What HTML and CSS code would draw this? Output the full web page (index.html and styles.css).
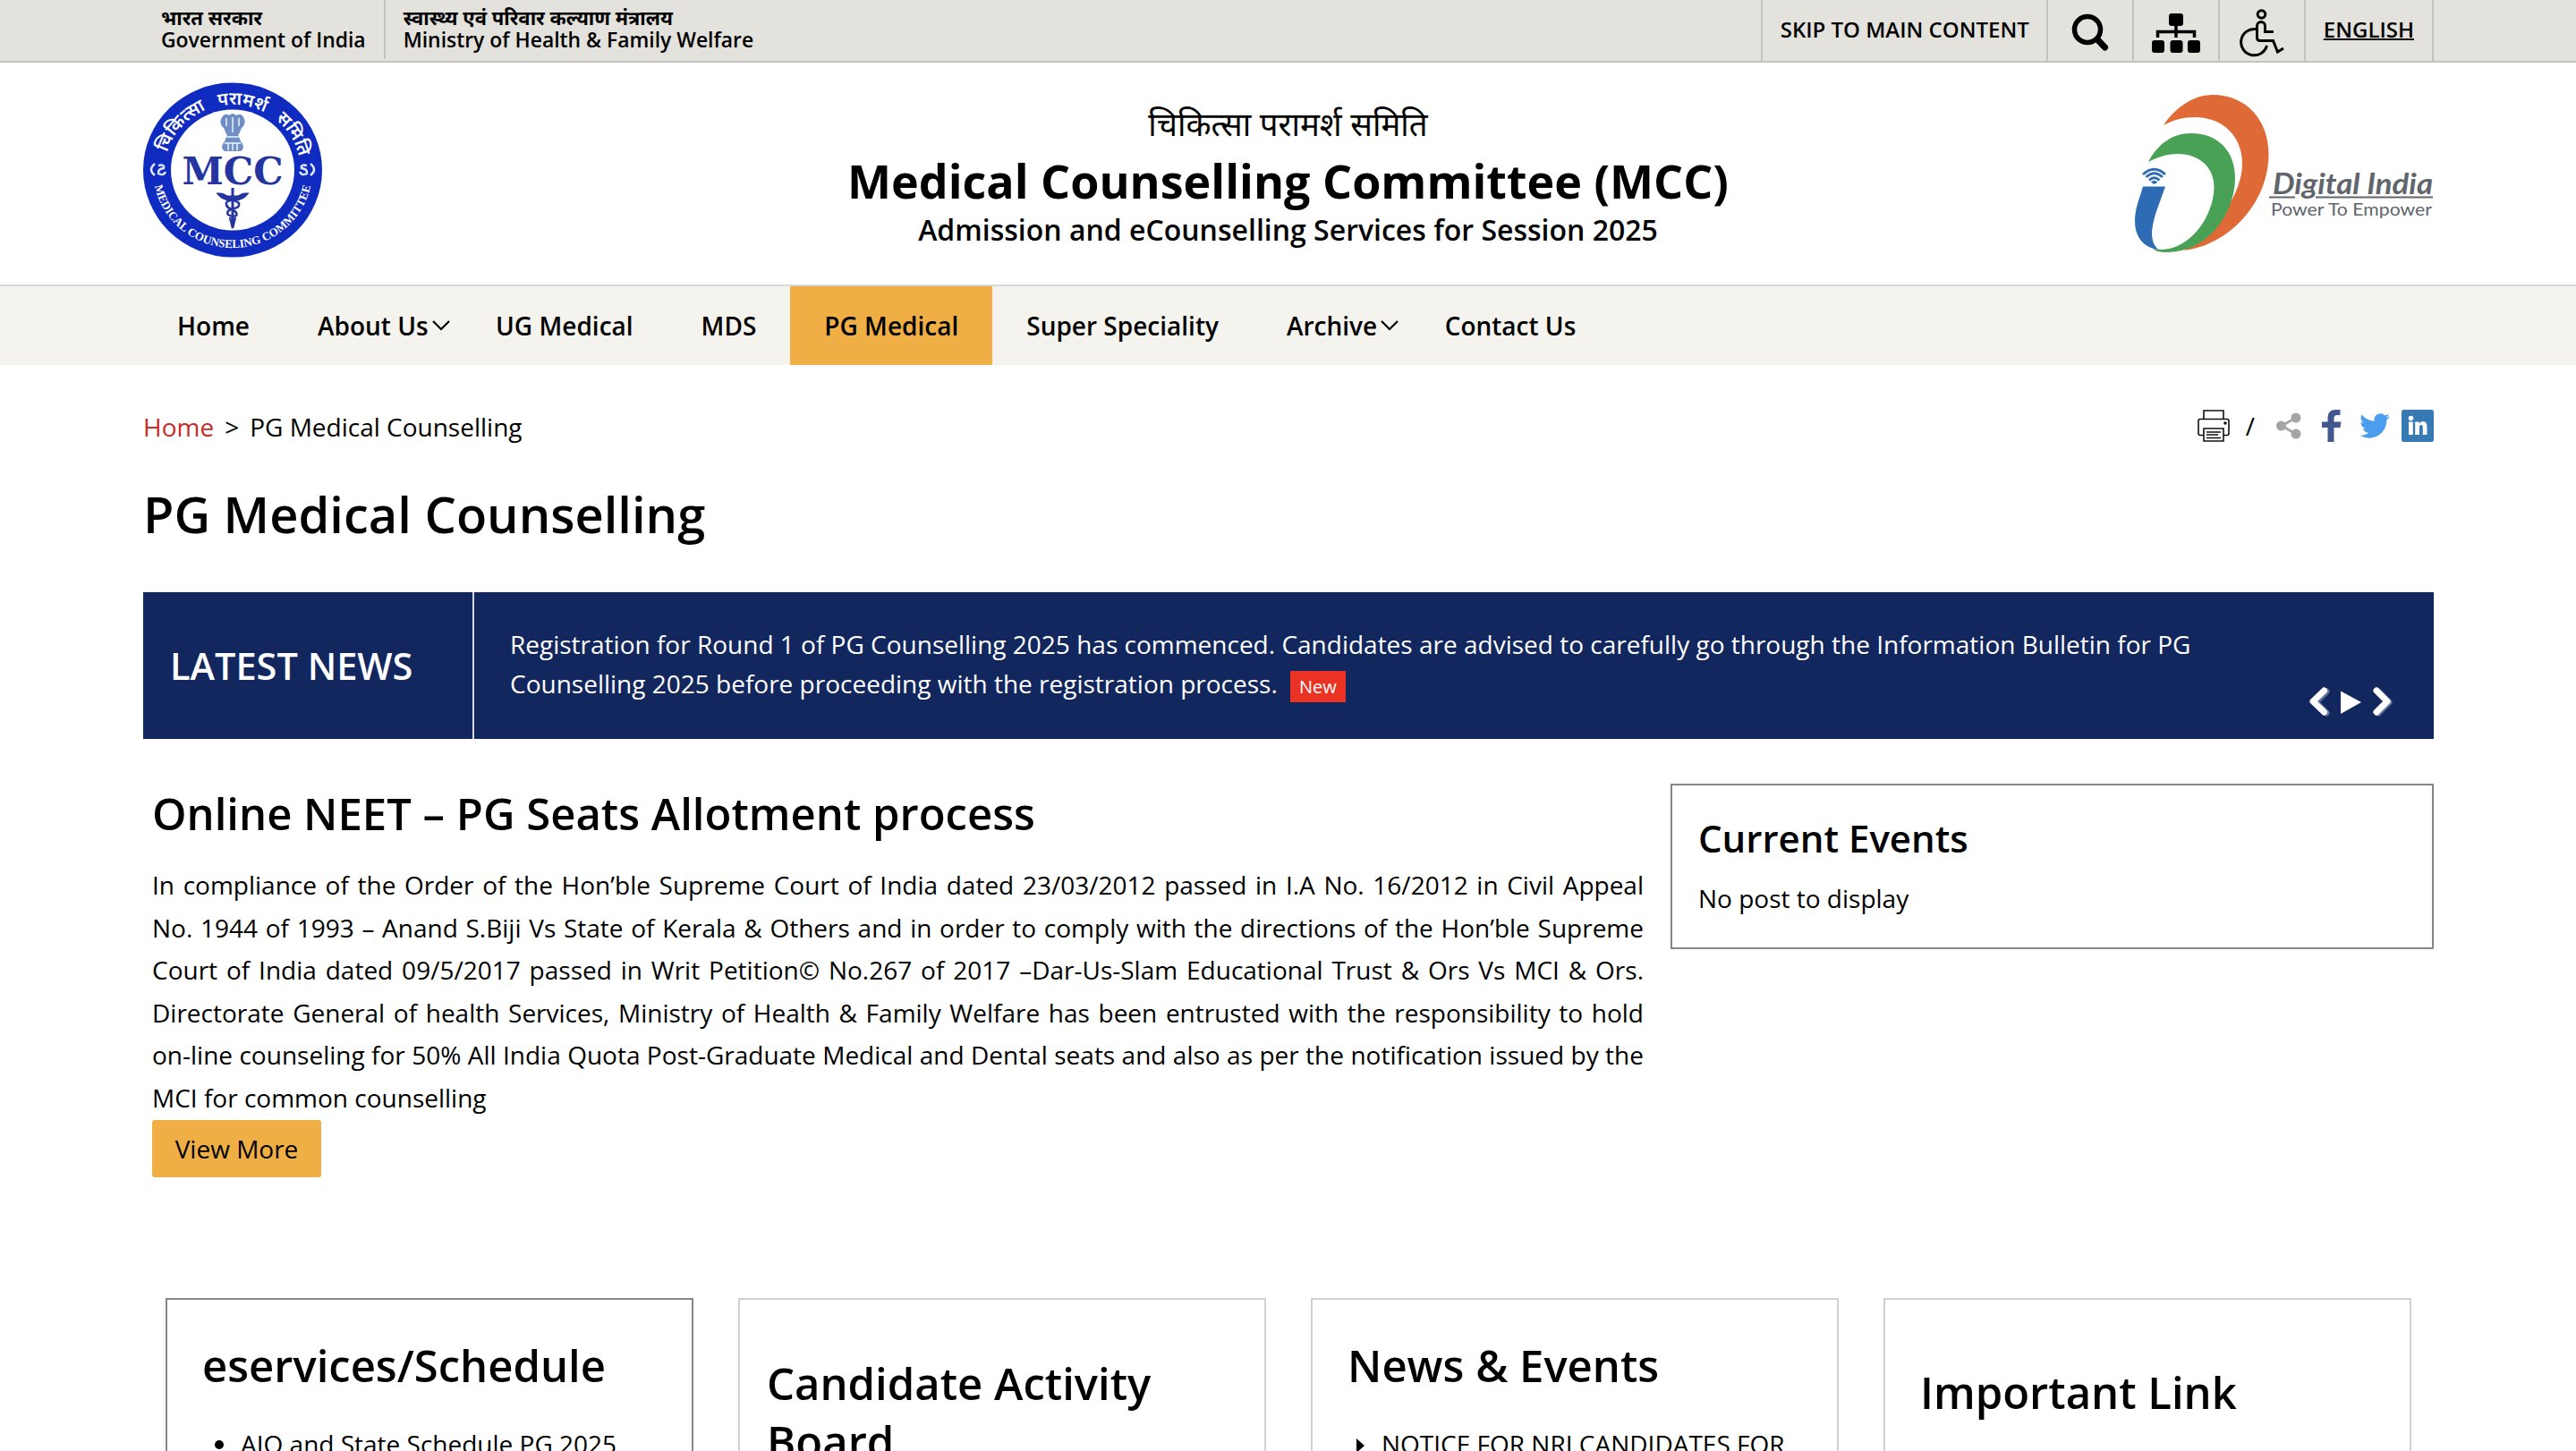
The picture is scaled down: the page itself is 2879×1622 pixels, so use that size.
FILE: index.html
```
<!DOCTYPE html>
<html lang="en">
<head>
    <meta charset="UTF-8">
    <meta name="viewport" content="width=device-width, initial-scale=1.0">
    <title>PG Medical Counselling | Medical Counselling Committee (MCC)</title>
    <link rel="stylesheet" href="styles.css">
</head>
<body>
    <div class="topbar">
        <div class="container topbar-inner">
            <a class="gov-link"><span class="hindi" lang="hi">भारत सरकार</span><span>Government of India</span></a>
            <a class="gov-link"><span class="hindi" lang="hi">स्वास्थ्य एवं परिवार कल्याण मंत्रालय</span><span>Ministry of Health &amp; Family Welfare</span></a>
            <div class="tools">
                <a class="tool skip">SKIP TO MAIN CONTENT</a>
                <a class="tool icon">
                    <svg width="42" height="44" viewBox="0 0 42 44">
                        <circle cx="18" cy="18" r="14.5" fill="none" stroke="#000" stroke-width="5.5"/>
                        <path d="M29 29L37.500 38" stroke="#000" stroke-width="7" stroke-linecap="round"/>
                    </svg>
                </a>
                <a class="tool icon">
                    <svg width="54" height="44" viewBox="0 0 54 44">
                        <rect x="19" y="0" width="16" height="14" rx="3"/>
                        <rect x="0" y="30" width="14" height="14" rx="3"/>
                        <rect x="20.500" y="30" width="14" height="14" rx="3"/>
                        <rect x="40" y="30" width="14" height="14" rx="3"/>
                        <path d="M27 13V27M6.500 27V20.500H47.500V27" fill="none" stroke="#000" stroke-width="3.500"/>
                    </svg>
                </a>
                <a class="tool icon">
                    <svg width="50" height="54" viewBox="0 0 50 54" fill="none" stroke="#000" stroke-width="3">
                        <circle cx="24.500" cy="6" r="4.300"/>
                        <path d="M38 25.500H28.500V19A4.500 4.500 0 0 0 19.500 19V32Q19.500 35.500 23 35.500H37.500L42.500 48L49 44"/>
                        <path d="M18 22.500A14.700 14.700 0 1 0 30.500 41"/>
                    </svg>
                </a>
                <a class="tool lang">ENGLISH</a>
            </div>
        </div>
    </div>

    <header class="header">
        <div class="container header-inner">
            <svg class="mcc-logo" width="202" height="198" viewBox="0 0 202 198">
                <defs>
                    <path id="arc-top" d="M25.500 98A75.500 73 0 0 1 176.500 98"/>
                    <path id="arc-bottom" d="M12 98A89 87 0 0 0 190 98"/>
                </defs>
                <ellipse cx="101" cy="98" rx="100" ry="97.500" fill="#0f2bc0"/>
                <ellipse cx="101" cy="98" rx="69" ry="67.500" fill="#fff"/>
                <text class="seal-hindi"><textPath href="#arc-top" startOffset="51%">चिकित्सा परामर्श समिति</textPath></text>
                <text class="seal-english"><textPath href="#arc-bottom" startOffset="50%">MEDICAL COUNSELING COMMITTEE</textPath></text>
                <g fill="none" stroke="#dfe4ff" stroke-width="2.500">
                    <path d="M14 91Q6 98 14 104M18 93Q25 91 24 96Q17 97 18 102Q24 105 26 100"/>
                    <path d="M188 91Q196 98 188 104M184 93Q177 91 178 96Q185 97 184 102Q178 105 176 100"/>
                </g>
                <!-- lion capital -->
                <g fill="#6f8fc4">
                    <path d="M88 41Q92 33 97 37Q101 33 105 37Q111 33 114 41Q116 47 111 51L108 58H94L91 51Q86 47 88 41Z"/>
                    <path d="M95 58H107L110 66Q116 73 110 77H92Q86 73 92 66Z"/>
                </g>
                <g fill="none" stroke="#eef3ff" stroke-width="1.500">
                    <path d="M94 40V49M101 39V56M108 40V49M94 61H108M92 68H110M96 68V76M101 68V76M106 68V76"/>
                </g>
                <text class="seal-mcc" x="101" y="113.500" textLength="113" lengthAdjust="spacingAndGlyphs">MCC</text>
                <g fill="none" stroke="#24359f">
                    <path d="M101 118V160" stroke-width="3"/>
                    <path d="M83 124Q90 123 95 127H107Q112 123 119 124Q115 130 107 132H95Q87 130 83 124Z" fill="#24359f"/>
                    <path d="M94 134Q101 129 108 135Q109 141 101 141Q93 144 96 148Q101 151 105 149Q107 145 100 142Q93 140 94 134M98 151L101 163L104 151" stroke-width="2.500"/>
                </g>
            </svg>
            <div class="site-title">
                <p class="title-hindi" lang="hi">चिकित्सा परामर्श समिति</p>
                <h1>Medical Counselling Committee (MCC)</h1>
                <p class="title-sub">Admission and eCounselling Services for Session 2025</p>
            </div>
            <svg class="digital-logo" width="336" height="180" viewBox="24 15 336 180">
                <path d="M58 50C70 32 90 16 113 16C150 16 175.500 44 175.500 82C175.500 138 130 184 81 190L100 176C112 165 120 155 127 146C140 126 146 108 146 93C146 62 124 41 93 41C80 41 69 44 58 50Z" fill="#e06a37"/>
                <path d="M41 91C51 72 67 59 89 59C119 59 138 79 138 109C138 147 109 192 61 192C55 192 49 191 46 188L53 189C88 190 114.500 151 114.500 119C114.500 97 98 82 74 82C61 82 51 86 41 91Z" fill="#49a156"/>
                <path d="M35 118.500H60C53 139 46 154 45 170C45 180 48 186 53 189C34 187 26 173 26 157C26 142 32 130 35 118.500Z" fill="#2d6cb5"/>
                <g fill="none" stroke="#2d6cb5" stroke-width="2.800">
                    <path d="M35 105Q47.500 93.500 60 105M38.500 108Q47.500 99.500 57 108M42 111.500Q47.500 106 53.500 111.500"/>
                    <path d="M44.500 113.500Q47.500 111 51 113.500L47.500 115.500Z" fill="#2d6cb5" stroke-width="1"/>
                </g>
                <text class="di-name" x="180" y="127" textLength="179" lengthAdjust="spacingAndGlyphs">Digital India</text>
                <path d="M176 130.500H205M228 130.500H359" stroke="#60656b" stroke-width="1.800"/>
                <text class="di-tag" x="178" y="151" textLength="180" lengthAdjust="spacingAndGlyphs">Power To Empower</text>
            </svg>
        </div>
    </header>

    <nav class="nav">
        <ul class="container nav-list">
            <li>Home</li>
            <li class="has-menu">About Us<svg width="20" height="12" viewBox="0 0 20 12"><path d="M1 1L10 10L19 1"/></svg></li>
            <li>UG Medical</li>
            <li>MDS</li>
            <li class="active">PG Medical</li>
            <li>Super Speciality</li>
            <li class="has-menu">Archive<svg width="20" height="12" viewBox="0 0 20 12"><path d="M1 1L10 10L19 1"/></svg></li>
            <li>Contact Us</li>
        </ul>
    </nav>

    <main class="container">
        <div class="crumb-row">
            <div class="breadcrumb"><a>Home</a><span>&gt;</span>PG Medical Counselling</div>
            <div class="share">
                <svg class="print" width="36" height="36" viewBox="0 0 36 36" fill="none" stroke="#111" stroke-width="1.600">
                    <path d="M7 10.500V1H29V10.500M7 28.500H3Q1 28.500 1 26.500V12.500Q1 10.500 3 10.500H33Q35 10.500 35 12.500V26.500Q35 28.500 33 28.500H29M7 21H29V35H7Z"/>
                    <path d="M10 25H26M10 28H23M10 31.500H26" stroke-width="1.300"/>
                    <circle cx="31" cy="15" r="1" fill="#111"/>
                </svg>
                <span class="slash">/</span>
                <svg class="share-icon" width="28" height="30" viewBox="0 0 28 30" fill="#a5a5a5">
                    <path d="M22 6L6 15L22 24" fill="none" stroke="#a5a5a5" stroke-width="2.800"/>
                    <circle cx="5.500" cy="15" r="5.500"/><circle cx="22" cy="6" r="5.500"/><circle cx="22" cy="24" r="5.500"/>
                </svg>
                <svg class="facebook" width="22" height="36" viewBox="0 0 22 36" fill="#43578f">
                    <path d="M6.500 36V20H0V13.500H6.500V9Q6.500 0 15.500 0H20.500V6H17Q13.500 6 13.500 9.500V13.500H21.500L20.500 20H13.500V36Z"/>
                </svg>
                <svg class="twitter" width="34" height="28" viewBox="0 0 24 20" fill="#4b9eee">
                    <path d="M23.950 2.570a10 10 0 0 1-2.820.770 4.960 4.960 0 0 0 2.160-2.720 10 10 0 0 1-3.120 1.190 4.920 4.920 0 0 0-8.380 4.480C7.690 6.090 4.070 4.130 1.640 1.160a4.820 4.820 0 0 0-.660 2.470c0 1.710.870 3.210 2.180 4.100a4.900 4.900 0 0 1-2.230-.610v.060a4.920 4.920 0 0 0 3.950 4.820 4.990 4.990 0 0 1-2.210.090 4.940 4.940 0 0 0 4.600 3.420A9.870 9.870 0 0 1 0 17.540a13.990 13.990 0 0 0 7.560 2.210c9.050 0 14-7.500 14-13.980 0-.210 0-.420-.020-.630a9.940 9.940 0 0 0 2.460-2.550z"/>
                </svg>
                <svg class="linkedin" width="36" height="36" viewBox="0 0 36 36">
                    <rect width="36" height="36" rx="2.500" fill="#3679b3"/>
                    <g fill="#fff"><circle cx="10.500" cy="9.500" r="2.800"/><path d="M8 13.500H12.800V28H8ZM15.200 13.500H19.600V15.500Q21 13 24 13Q28.500 13 28.500 19V28H23.800V20Q23.800 17 22 17Q19.900 17 19.900 20V28H15.200Z"/></g>
                </svg>
            </div>
        </div>

        <h2 class="page-title">PG Medical Counselling</h2>

        <section class="news">
            <h3 class="news-label">LATEST NEWS</h3>
            <div class="news-text">Registration for Round 1 of PG Counselling 2025 has commenced. Candidates are advised to carefully go through the Information Bulletin for PG Counselling 2025 before proceeding with the registration process. <span class="badge">New</span></div>
            <svg class="news-controls" width="96" height="36" viewBox="0 0 96 36">
                <g fill="none" stroke-width="7" stroke-linecap="round" stroke-linejoin="round">
                    <path d="M20 5L8 17L20 29M78 5L90 17L78 29" stroke="#68759a"/>
                    <path d="M17.500 4L5 16L17.500 28M76 4L88 16L76 28" stroke="#fff"/>
                </g>
                <path d="M36 4.500L59 17L36 30Z" fill="#fff"/>
            </svg>
        </section>

        <section class="intro">
            <article class="about">
                <h2>Online NEET – PG Seats Allotment process</h2>
                <p>In compliance of the Order of the Hon’ble Supreme Court of India dated 23/03/2012 passed in I.A No. 16/2012 in Civil Appeal No. 1944 of 1993 – Anand S.Biji Vs State of Kerala &amp; Others and in order to comply with the directions of the Hon’ble Supreme Court of India dated 09/5/2017 passed in Writ Petition© No.267 of 2017 –Dar-Us-Slam Educational Trust &amp; Ors Vs MCI &amp; Ors. Directorate General of health Services, Ministry of Health &amp; Family Welfare has been entrusted with the responsibility to hold on-line counseling for 50% All India Quota Post-Graduate Medical and Dental seats and also as per the notification issued by the MCI for common counselling</p>
                <a class="btn">View More</a>
            </article>
            <aside class="events">
                <h3>Current Events</h3>
                <p>No post to display</p>
            </aside>
        </section>

        <section class="cards">
            <div class="card card-dark">
                <h2>eservices/Schedule</h2>
                <ul class="dots"><li>AIQ and State Schedule PG 2025</li></ul>
            </div>
            <div class="card card-board">
                <h2>Candidate Activity Board</h2>
            </div>
            <div class="card">
                <h2>News &amp; Events</h2>
                <ul class="arrows"><li>NOTICE FOR NRI CANDIDATES FOR</li></ul>
            </div>
            <div class="card card-links">
                <h2>Important Link</h2>
            </div>
        </section>
    </main>
</body>
</html>
```
FILE: styles.css
```
* {
    box-sizing: border-box;
}

body {
    margin: 0;
    height: 1622px;
    overflow: hidden;
    background-color: #fff;
    color: #000;
    font-family: "Open Sans", "Noto Sans", sans-serif;
    font-size: 28px;
}

h1, h2, h3, p, ul {
    margin: 0;
    padding: 0;
    font-weight: 600;
}

p, ul {
    font-weight: 400;
    list-style: none;
}

svg {
    display: block;
    flex: none;
}

.container {
    width: 2560px;
    margin: 0 159px 0 160px;
}

/* Top bar */
.topbar {
    height: 70px;
    background-color: #e3e2dd;
    border-bottom: 2px solid #c1c1bf;
    font-size: 24px;
    font-weight: 600;
}

.topbar-inner {
    display: flex;
    height: 68px;
}

.gov-link {
    height: 66px;
    padding: 6px 20px 0;
    font-size: 22.9px;
    line-height: 26px;
}

.gov-link + .gov-link {
    border-left: 2px solid #c1c1bf;
}

.gov-link span {
    display: block;
    height: 26px;
}

.gov-link .hindi {
    font-size: 22px;
    font-weight: 700;
}

.tools {
    display: flex;
    margin-left: auto;
    border-right: 2px solid #c1c1bf;
}

.tool {
    border-left: 2px solid #c1c1bf;
    padding: 0 20px;
    line-height: 66px;
}

.tool.skip {
    padding-right: 19px;
}

.tool.icon {
    display: flex;
    align-items: center;
    justify-content: center;
    width: 96px;
    padding: 5px 0 0;
}

.tool.lang {
    text-decoration: underline;
    text-decoration-thickness: 2px;
}

/* Header */
.header {
    height: 250px;
    border-bottom: 2px solid #d8d8d8;
}

.header-inner {
    display: flex;
    justify-content: space-between;
}

.mcc-logo {
    margin: 22px 0 0 -1px;
}

.seal-hindi {
    fill: #fff;
    font-size: 20px;
    font-weight: 600;
    word-spacing: 9px;
    text-anchor: middle;
}

.seal-english {
    fill: #fff;
    font-family: "Liberation Serif", serif;
    font-size: 13px;
    font-weight: 700;
    text-anchor: middle;
}

.seal-mcc {
    fill: #24359f;
    font-family: "DejaVu Serif", serif;
    font-size: 43px;
    font-weight: 700;
    text-anchor: middle;
}

.site-title {
    flex: 1;
    padding: 43px 0 0 134px;
    text-align: center;
}

.title-hindi {
    height: 54px;
    font-size: 36.6px;
    line-height: 50px;
}

.site-title h1 {
    font-size: 52px;
    font-weight: 700;
    line-height: 70px;
}

.title-sub {
    font-size: 32px;
    font-weight: 600;
    line-height: 40px;
}

.digital-logo {
    margin-top: 35px;
}

.di-name {
    fill: #60656b;
    font-family: Lato, sans-serif;
    font-size: 33px;
    font-style: italic;
    font-weight: 700;
}

.di-tag {
    fill: #60656b;
    font-family: Lato, sans-serif;
    font-size: 20px;
}

/* Navigation */
.nav {
    background-color: #f4f3ee;
}

.nav-list {
    display: flex;
    height: 88px;
    font-weight: 600;
    line-height: 88px;
}

.nav-list li {
    padding: 0 38px;
    white-space: nowrap;
}

.nav-list .active {
    background-color: #efaf44;
}

.nav-list .has-menu {
    display: flex;
    align-items: center;
    gap: 4px;
    padding-right: 13.5px;
}

.has-menu path {
    fill: none;
    stroke: #000;
    stroke-width: 2.2;
}

/* Breadcrumb and share icons */
.crumb-row {
    display: flex;
    justify-content: space-between;
    align-items: center;
    height: 44px;
    margin-top: 47px;
}

.breadcrumb {
    line-height: 44px;
}

.breadcrumb a {
    color: #c62d26;
}

.breadcrumb span {
    margin: 0 12px;
}

.share {
    display: flex;
    align-items: center;
    margin-bottom: 2px;
}

.slash {
    margin: 0 24px 0 18px;
}

.facebook {
    margin-left: 23px;
}

.twitter {
    margin-left: 20px;
}

.linkedin {
    margin-left: 13px;
}

.page-title {
    margin: 37px 0 50px;
    font-size: 56px;
    line-height: 76px;
}

/* Latest news */
.news {
    display: flex;
    height: 164px;
    background-color: #12275e;
    color: #fff;
}

.news-label {
    width: 370px;
    padding-left: 30px;
    border-right: 2px solid #d5d8e0;
    font-size: 41.5px;
    line-height: 165px;
}

.news-text {
    width: 1960px;
    padding: 36px 0 0 40px;
    line-height: 44px;
}

.badge {
    display: inline-block;
    height: 35px;
    margin-left: 7px;
    padding: 0 10px;
    background-color: #eb3323;
    font-size: 20px;
    line-height: 36px;
}

.news-controls {
    margin: 106px 0 0 90px;
}

/* Introduction */
.intro {
    display: flex;
    justify-content: space-between;
    align-items: flex-start;
    margin-top: 50px;
    padding-left: 10px;
}

.about {
    width: 1667px;
}

.about h2 {
    font-size: 49px;
    line-height: 67px;
}

.about p {
    margin-top: 23px;
    line-height: 47.6px;
    text-align: justify;
}

.btn {
    display: block;
    width: 189px;
    background-color: #efaf44;
    border-radius: 3px;
    line-height: 64px;
    text-align: center;
}

.events {
    width: 853px;
    height: 185px;
    padding: 30px 29px;
    border: 2px solid #868686;
}

.events h3 {
    font-size: 42px;
    line-height: 58px;
}

.events p {
    margin-top: 16px;
    line-height: 44px;
}

/* Cards */
.cards {
    display: grid;
    grid-template-columns: repeat(4, 590px);
    gap: 50px;
    margin: 135px 0 0 25px;
}

.card {
    height: 600px;
    padding: 41px 39px;
    border: 2px solid #d0d0d0;
}

.card-dark {
    border-color: #868686;
}

.card-board {
    padding: 61px 30px;
}

.card-links {
    padding-top: 71px;
}

.card h2 {
    font-size: 49px;
    line-height: 65px;
}

.card ul {
    margin-top: 32px;
    line-height: 47.6px;
}

.card li {
    display: flex;
    align-items: center;
    white-space: nowrap;
}

.dots li::before {
    content: "";
    width: 10px;
    height: 10px;
    margin: 2px 19px 0 14px;
    border-radius: 50%;
    background-color: #000;
}

.arrows li::before {
    content: "";
    margin: 4px 19px 0 10px;
    border: solid transparent;
    border-width: 8px 0 8px 9px;
    border-left-color: #000;
}
```
